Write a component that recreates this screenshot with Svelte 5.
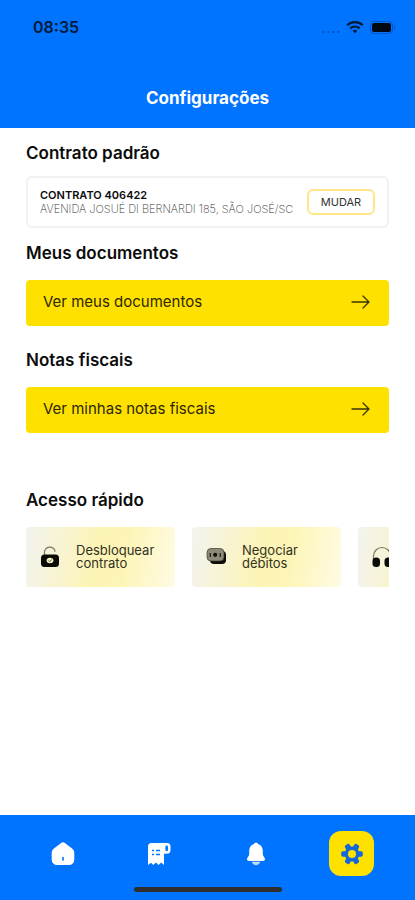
<script lang="ts">
  type Shortcut = { label: string; icon: 'lock' | 'money' | 'headset' };
  type Tab = { label: string; icon: 'home' | 'bill' | 'bell' | 'gear' };

  const shortcuts: Shortcut[] = [
    { label: 'Desbloquear contrato', icon: 'lock' },
    { label: 'Negociar débitos', icon: 'money' },
    { label: '', icon: 'headset' },
  ];

  const tabs: Tab[] = [
    { label: 'Início', icon: 'home' },
    { label: 'Faturas', icon: 'bill' },
    { label: 'Notificações', icon: 'bell' },
    { label: 'Configurações', icon: 'gear' },
  ];

  let active = $state('gear');
</script>

{#snippet arrow()}
  <svg class="arrow" viewBox="0 0 20 16" aria-hidden="true">
    <path d="M1 8h17M12 2l6 6-6 6" fill="none" stroke="#3a3400" stroke-width="1.3" stroke-linecap="round" stroke-linejoin="round" />
  </svg>
{/snippet}

<div class="screen">
  <header>
    <div class="status">
      <span class="time">08:35</span>
      <div class="indicators">
        <svg width="18" height="4" viewBox="0 0 18 4" fill="#0050b8">
          <circle cx="1.5" cy="2" r="1.1" />
          <circle cx="6.5" cy="2" r="1.1" />
          <circle cx="11.5" cy="2" r="1.1" />
          <circle cx="16.5" cy="2" r="1.1" />
        </svg>
        <svg width="18" height="14" viewBox="0 0 18 14" fill="none" stroke="#001a3a" stroke-width="2.2">
          <path d="M1.2 5.2a11.2 11.2 0 0 1 15.6 0" />
          <path d="M4.3 8.4a6.8 6.8 0 0 1 9.4 0" />
          <path d="M9 13.2l-2.3-2.4a3.3 3.3 0 0 1 4.6 0z" fill="#001a3a" stroke="none" />
        </svg>
        <svg width="26" height="13" viewBox="0 0 26 13">
          <rect x="0.5" y="0.5" width="22" height="12" rx="3.5" fill="none" stroke="#0055c4" />
          <rect x="2" y="2" width="19" height="9" rx="2" fill="#000814" />
          <path d="M24 4.5c1.6.6 1.6 3.4 0 4z" fill="#0055c4" />
        </svg>
      </div>
    </div>
    <h1>Configurações</h1>
  </header>

  <main>
    <section>
      <h2>Contrato padrão</h2>
      <div class="contract">
        <div class="contract-info">
          <strong>CONTRATO 406422</strong>
          <span>AVENIDA JOSUÉ DI BERNARDI 185, SÃO JOSÉ/SC</span>
        </div>
        <button class="change" type="button">MUDAR</button>
      </div>
    </section>

    <section class="documents">
      <h2>Meus documentos</h2>
      <button class="action" type="button">
        <span>Ver meus documentos</span>
        {@render arrow()}
      </button>
    </section>

    <section class="invoices">
      <h2>Notas fiscais</h2>
      <button class="action" type="button">
        <span>Ver minhas notas fiscais</span>
        {@render arrow()}
      </button>
    </section>

    <section class="quick">
      <h2>Acesso rápido</h2>
      <div class="shortcuts">
        {#each shortcuts as shortcut}
          <button class="shortcut" type="button">
            <svg width="20" height="22" viewBox="0 0 20 22" aria-hidden="true">
              {#if shortcut.icon === 'lock'}
                <path d="M4.5 9V6.5a5.3 5 0 0 1 10.6-.8" fill="none" stroke="#77755c" stroke-width="1.2" />
                <rect x="1" y="8.5" width="18" height="12.5" rx="3.5" fill="#0b0b06" />
                <ellipse cx="10" cy="14.5" rx="3.4" ry="2.8" fill="#f5f1c4" />
                <path d="M8.5 14.5l1.2 1.2 2-2.2" fill="none" stroke="#55533c" stroke-width="1" />
              {:else if shortcut.icon === 'money'}
                <rect x="4" y="5" width="16" height="13" rx="4" fill="#0b0b06" />
                <rect x="1" y="2.5" width="17" height="12.5" rx="4" fill="#8d8b78" stroke="#3c3b2e" stroke-width="0.7" />
                <circle cx="9.2" cy="8.8" r="2.1" fill="#111109" />
                <path d="M4.3 7v4M14.2 7v4" stroke="#222217" stroke-width="1.3" />
              {:else}
                <path d="M1.5 13V10a8.5 8.5 0 0 1 17 0v3" fill="none" stroke="#77755c" stroke-width="1.2" />
                <rect x="0.5" y="11.500" width="7.500" height="9.500" rx="3.500" fill="#0b0b06" />
                <rect x="12.500" y="11.500" width="7.500" height="9.500" rx="3.500" fill="#0b0b06" />
              {/if}
            </svg>
            {#if shortcut.label}
              <span>{shortcut.label}</span>
            {/if}
          </button>
        {/each}
      </div>
    </section>
  </main>

  <footer>
    <nav>
      {#each tabs as tab}
        <button
          class="tab"
          class:active={active === tab.icon}
          type="button"
          aria-label={tab.label}
          onclick={() => (active = tab.icon)}
        >
          <svg width="24" height="24" viewBox="0 0 24 24" fill="currentColor">
            {#if tab.icon === 'home'}
              <path d="M9.8 1.2a3.5 3.5 0 0 1 4.4 0l6.9 5.3a5 5 0 0 1 2.2 4v7.2a5.3 5.3 0 0 1-5.3 5.3h-12a5.3 5.3 0 0 1-5.300-5.300v-7.200a5 5 0 0 1 2.200-4z" />
              <path d="M12 15.5v2.500" stroke="#0073ff" stroke-width="1.600" stroke-linecap="round" />
            {:else if tab.icon === 'bill'}
              <path d="M4.500 1H20v10.500h-3V23l-2.800-2.500-2.700 2.500L9 20.500 6.200 23 4 20.700 1 23V4.500A3.500 3.500 0 0 1 4.500 1z" />
              <rect x="16" y="1" width="7.500" height="10.500" rx="3.600" />
              <ellipse cx="19.700" cy="6.200" rx="1.400" ry="3" fill="#0073ff" />
              <path d="M5 8.500h2M9 8.500h4M5 12.500h2M9 12.500h4" stroke="#0073ff" stroke-width="1.300" />
            {:else if tab.icon === 'bell'}
              <path d="M12 .7c1.200 0 1.800.6 2.200 1.300 2.900 1 4.600 3.600 4.600 6.600v3.700c0 1.900 2.200 3.200 2.200 5 0 1.200-.9 1.700-2 1.700H5c-1.100 0-2-.5-2-1.700 0-1.800 2.200-3.100 2.200-5V8.600C5.200 5.600 6.900 3 9.800 2c.4-.7 1-1.300 2.200-1.300z" />
              <path d="M7.500 19.700h9c-.8 1.900-3 3.600-4.500 3.600s-3.700-1.700-4.500-3.600z" opacity="0.75" />
            {:else}
              {#each [30, 90, 150] as angle}
                <rect x="9.300" y="1.200" width="5.400" height="21.600" rx="1.600" transform="rotate({angle} 12 12)" />
              {/each}
              <circle cx="12" cy="12" r="7.400" />
              <circle cx="12" cy="12" r="4" fill="#ffe100" />
            {/if}
          </svg>
        </button>
      {/each}
    </nav>
    <div class="home-indicator"></div>
  </footer>
</div>

<style>
  :global(body) {
    margin: 0;
    background: #fff;
  }

  .screen {
    display: flex;
    flex-direction: column;
    min-height: 100vh;
    font-family: Inter, 'Liberation Sans', sans-serif;
    color: #0c0c0c;
  }

  button {
    margin: 0;
    padding: 0;
    border: 0;
    background: none;
    font-family: inherit;
    color: inherit;
    cursor: pointer;
  }

  svg {
    flex-shrink: 0;
  }

  header {
    padding: 16px 19px 19px 33px;
    background: #0073ff;
  }

  .status {
    display: flex;
    align-items: center;
    justify-content: space-between;
    height: 22px;
    margin-bottom: 49px;
  }

  .time {
    font-size: 16px;
    font-weight: 600;
    line-height: 22px;
    color: #001a3a;
  }

  .indicators {
    display: flex;
    align-items: center;
    gap: 6px;
  }

  .indicators svg:first-child {
    align-self: flex-end;
  }

  h1 {
    margin: 0;
    padding-right: 14px;
    font-size: 17px;
    font-weight: 700;
    line-height: 22px;
    text-align: center;
    color: #fff;
  }

  main {
    flex: 1;
    padding: 14px 26px 24px;
  }

  h2 {
    margin: 0 0 16px;
    font-size: 17px;
    font-weight: 600;
    line-height: 22px;
  }

  .contract {
    display: flex;
    align-items: center;
    justify-content: space-between;
    gap: 8px;
    margin-top: -4px;
    padding: 10px 12px;
    border: 2px solid #f1f1f1;
    border-radius: 6px;
  }

  .contract-info {
    display: flex;
    flex-direction: column;
    font-size: 11px;
    line-height: 14px;
  }

  .contract-info strong {
    font-weight: 600;
  }

  .contract-info span {
    font-weight: 200;
    color: #333;
  }

  .change {
    flex-shrink: 0;
    width: 68px;
    height: 26px;
    border: 2px solid #ffe68a;
    border-radius: 6px;
    font-size: 11px;
    color: #333;
  }

  .documents {
    margin-top: 14px;
  }

  .invoices {
    margin-top: 23px;
  }

  .quick {
    margin-top: 56px;
  }

  .action {
    display: flex;
    align-items: center;
    justify-content: space-between;
    width: 100%;
    height: 46px;
    padding: 0 18px 2px 17px;
    border-radius: 4px;
    background: #ffe100;
    font-size: 15px;
    line-height: 18px;
    color: #2c2700;
  }

  .arrow {
    width: 20px;
    height: 16px;
  }

  .shortcuts {
    display: flex;
    gap: 17px;
    overflow: hidden;
  }

  .shortcut {
    display: flex;
    flex-shrink: 0;
    align-items: center;
    gap: 16px;
    width: 149px;
    height: 60px;
    padding: 0 14px;
    border-radius: 4px;
    background: linear-gradient(100deg, #f3f3f0 0%, #fcf4b4 48%, #fdf5b8 66%, #fefbe4 100%);
    font-size: 13px;
    line-height: 13px;
    text-align: left;
    color: #33311f;
  }

  footer {
    padding: 16px 15px 8px;
    background: #0073ff;
  }

  nav {
    display: grid;
    grid-template-columns: repeat(4, 1fr);
    justify-items: center;
    margin-bottom: 11px;
  }

  .tab {
    display: flex;
    align-items: center;
    justify-content: center;
    width: 45px;
    height: 45px;
    border-radius: 12px;
    color: #fff;
  }

  .tab.active {
    background: #ffe100;
    color: #1467d8;
  }

  .home-indicator {
    width: 148px;
    height: 5px;
    margin: 0 auto;
    border-radius: 3px;
    background: #2f2f2f;
  }
</style>
